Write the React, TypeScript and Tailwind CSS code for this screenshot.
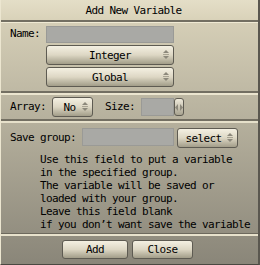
import React from "react";

const font = { fontFamily: '"DejaVu Sans Mono", "Liberation Mono", monospace' };

function UpDown() {
  return (
    <svg width="6" height="10" viewBox="0 0 6 10" className="block">
      <path d="M3 0 L6 3 L0 3 Z" fill="#8c887b" />
      <rect x="0" y="4" width="6" height="1" fill="#a9a493" />
      <path d="M0 6 L6 6 L3 9 Z" fill="#8c887b" />
    </svg>
  );
}

function LeftRight() {
  return (
    <svg width="8" height="7" viewBox="0 0 8 7" className="block">
      <path d="M3 0 L3 7 L0 3.5 Z" fill="#8c887b" />
      <path d="M5 0 L8 3.5 L5 7 Z" fill="#8c887b" />
    </svg>
  );
}

function Btn({ label, className, spin = true }: { label: string; className: string; spin?: boolean }) {
  return (
    <div
      className={
        "relative flex items-center justify-center rounded-[3px] border border-[#5e5b52] bg-gradient-to-b from-[#f4f0e2] via-[#ddd7c4] to-[#a29d89] text-black " +
        className
      }
    >
      <span className="leading-none">{label}</span>
      {spin && (
        <span className="absolute right-[4px] top-1/2 -translate-y-1/2">
          <UpDown />
        </span>
      )}
    </div>
  );
}

export default function App() {
  return (
    <div
      style={font}
      className="w-[260px] h-[265px] flex flex-col border-l border-[#ece6d0] border-r-2 border-r-[#5a574f] border-b border-b-[#4a4841] text-[11px] tracking-[-0.62px] text-black bg-gradient-to-b from-[#dcd5bc] to-[#8a8679]"
    >
      {/* title */}
      <div className="h-[22px] shrink-0 flex items-center justify-center bg-gradient-to-b from-[#e4dec7] to-[#d9d2b9] border-b-2 border-[#736f62] pl-[8px]">
        <span className="leading-none">Add New Variable</span>
      </div>

      {/* panel 1 */}
      <div className="border-t border-[#f0ead4] pt-[3px] pl-[9px] pb-[4px] grid grid-cols-[36px_128px] gap-y-[2px]">
        <div className="h-[17px] flex items-center">Name:</div>
        <div className="h-[17px] bg-[#a9a9a5] border border-[#9a9a96]" />
        <div />
        <Btn label="Integer" className="h-[20px]" />
        <div />
        <Btn label="Global" className="h-[20px]" />
      </div>

      {/* panel 2 */}
      <div className="border-t-2 border-[#736f62]">
        <div className="border-t-2 border-[#ebe5cf] h-[26px] pl-[9px] flex items-center">
          <div className="w-[42px]">Array:</div>
          <Btn label="No" className="w-[41px] h-[20px] pr-[6px]" />
          <div className="w-[12px]" />
          <div className="w-[36px]">Size:</div>
          <div className="w-[33px] h-[18px] bg-[#a9a9a5] border border-[#9a9a96]" />
          <div className="w-[10px] h-[18px] flex items-center justify-center rounded-[3px] border border-[#5e5b52] bg-gradient-to-b from-[#efeadb] to-[#a8a390]">
            <LeftRight />
          </div>
        </div>
      </div>

      {/* panel 3 */}
      <div className="border-t-2 border-[#736f62]">
        <div className="border-t-2 border-[#e6e0ca] pt-[5px] pl-[9px] h-[112px]">
          <div className="flex items-center h-[20px]">
            <div className="w-[72px]">Save group:</div>
            <div className="w-[92px] h-[18px] bg-[#a9a9a5] border border-[#9a9a96] self-start" />
            <div className="w-[3px]" />
            <Btn label="select" className="w-[61px] h-[20px] pr-[8px]" />
          </div>
          <div className="pl-[30px] pt-[5px] leading-[13px] whitespace-pre">
            <div>Use this field to put a variable</div>
            <div>in the specified group.</div>
            <div>The variable will be saved or</div>
            <div>loaded with your group.</div>
            <div>Leave this field blank</div>
            <div>if you don’t want save the variable</div>
          </div>
        </div>
      </div>

      {/* bottom */}
      <div className="border-t border-[#6d695d]">
        <div className="border-t-2 border-[#e8e2cc] pt-[4px] flex justify-center gap-[4px] pr-[4px]">
          <Btn label="Add" className="w-[66px] h-[19px]" spin={false} />
          <Btn label="Close" className="w-[61px] h-[19px]" spin={false} />
        </div>
      </div>
    </div>
  );
}
